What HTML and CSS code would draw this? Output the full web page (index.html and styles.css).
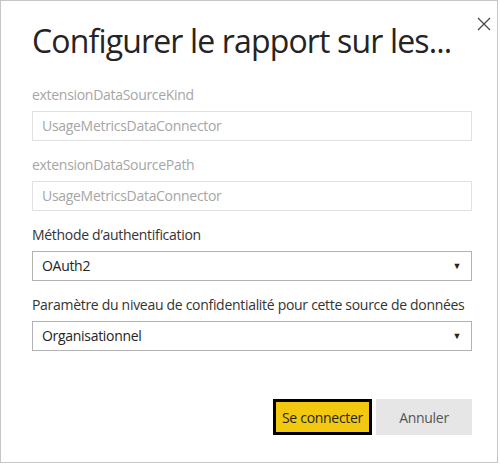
FILE: index.html
```html
<!DOCTYPE html>
<html lang="fr">
<head>
<meta charset="utf-8">
<link rel="stylesheet" href="styles.css">
</head>
<body>
<div class="dialog">
  <button class="close" aria-label="Fermer">
    <svg width="14" height="14" viewBox="0 0 14 14"><path d="M1 1 L13 13 M13 1 L1 13" stroke="#444" stroke-width="1.2" fill="none"/></svg>
  </button>
  <h1 class="title">Configurer le rapport sur les...</h1>
  <div class="field">
    <div class="label muted">extensionDataSourceKind</div>
    <div class="input">UsageMetricsDataConnector</div>
  </div>
  <div class="field">
    <div class="label muted">extensionDataSourcePath</div>
    <div class="input">UsageMetricsDataConnector</div>
  </div>
  <div class="field">
    <div class="label">Méthode d’authentification</div>
    <div class="select"><span>OAuth2</span><span class="arrow">▼</span></div>
  </div>
  <div class="field">
    <div class="label">Paramètre du niveau de confidentialité pour cette source de données</div>
    <div class="select"><span>Organisationnel</span><span class="arrow">▼</span></div>
  </div>
  <div class="actions">
    <button class="btn primary">Se connecter</button>
    <button class="btn secondary">Annuler</button>
  </div>
</div>
</body>
</html>
```
FILE: styles.css
```css
html, body { margin: 0; padding: 0; background: #fff; }
body { font-family: "Open Sans", "Noto Sans", sans-serif; color: #252423; }
.dialog {
  position: relative;
  box-sizing: border-box;
  width: 498px;
  height: 463px;
  border: 1px solid #c6c6c6;
  padding: 0 26px 0 31px;
  display: flex;
  flex-direction: column;
}
.close {
  position: absolute;
  top: 15px;
  right: 5px;
  width: 16px;
  height: 16px;
  padding: 0;
  border: 0;
  background: none;
  display: flex;
  align-items: center;
  justify-content: center;
}
.title {
  margin: 18px 0 0 0;
  font-weight: 400;
  font-size: 32px;
  line-height: 44px;
  color: #252423;
  letter-spacing: -0.85px;
  white-space: nowrap;
}
.field { display: flex; flex-direction: column; }
.label {
  font-size: 14px;
  line-height: 20px;
  color: #333;
  margin-top: 14px;
  margin-bottom: 6px;
  white-space: nowrap;
  letter-spacing: -0.3px;
}
.field:first-of-type .label { margin-top: 22px; }
.label.muted { color: #a6a6a6; }
.input, .select {
  box-sizing: border-box;
  width: 440px;
  height: 30px;
  padding: 0 8px 0 9px;
  font-size: 14px;
  line-height: 28px;
  display: flex;
  align-items: center;
  letter-spacing: -0.3px;
}
.input { border: 1px solid #e1e1e1; color: #a6a6a6; }
.select { border: 1px solid #b3b3b3; color: #252423; justify-content: space-between; }
.arrow { font-size: 9px; color: #252423; margin-right: 2px; }
.actions {
  margin-top: auto;
  margin-bottom: 27px;
  display: flex;
  justify-content: flex-end;
  gap: 4px;
  width: 440px;
}
.btn {
  box-sizing: border-box;
  height: 36px;
  font-family: inherit;
  font-size: 14px;
  padding: 0;
  letter-spacing: -0.3px;
}
.primary {
  width: 99px;
  background: #f2c811;
  border: 3px solid #000;
  color: #252423;
}
.secondary {
  width: 96px;
  background: #e6e6e6;
  border: 1px solid #e6e6e6;
  color: #555;
}
```
